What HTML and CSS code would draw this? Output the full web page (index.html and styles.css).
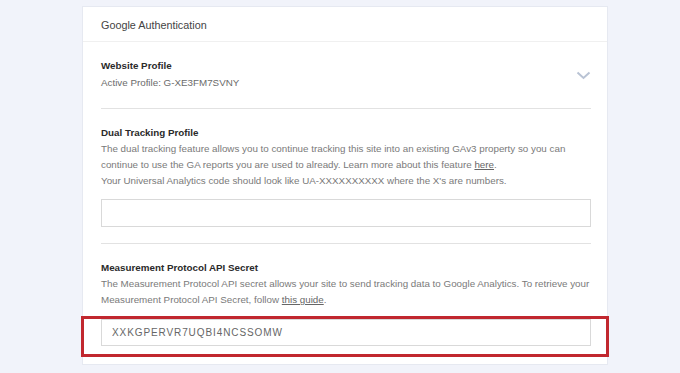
FILE: index.html
```html
<!DOCTYPE html>
<html lang="en">
<head>
    <meta charset="UTF-8">
    <meta name="viewport" content="width=device-width, initial-scale=1.0">
    <title>Google Authentication</title>
    <link rel="stylesheet" href="styles.css">
</head>

<body>
    <div class="settings-card">
        <div class="card-header">Google Authentication</div>

        <div class="setting-row profile-row">
            <div>
                <div class="setting-title">Website Profile</div>
                <div class="setting-sub">Active Profile: G-XE3FM7SVNY</div>
            </div>
            <svg class="chevron" width="15" height="9" viewBox="0 0 15 9">
                <path d="M1.5 1.5 L7.5 7 L13.5 1.5" fill="none" stroke="#b9c3d4" stroke-width="2"/>
            </svg>
        </div>

        <div class="setting-row">
            <div class="setting-title">Dual Tracking Profile</div>
            <p class="setting-desc">The dual tracking feature allows you to continue tracking this site into an existing GAv3 property so you can continue to use the GA reports you are used to already. Learn more about this feature <a href="#">here</a>.<br>
            Your Universal Analytics code should look like UA-XXXXXXXXXX where the X's are numbers.</p>
            <input type="text" class="setting-input">
        </div>

        <div class="setting-row last-row">
            <div class="setting-title">Measurement Protocol API Secret</div>
            <p class="setting-desc">The Measurement Protocol API secret allows your site to send tracking data to Google Analytics. To retrieve your Measurement Protocol API Secret, follow <a href="#">this guide</a>.</p>
        </div>
        <div class="highlight">
            <input type="text" class="setting-input secret-input" value="XXKGPERVR7UQBI4NCSSOMW">
        </div>
    </div>
</body>
</html>
```

FILE: styles.css
```css
body {
    margin: 0;
    background-color: #f1f3fa;
    font-family: 'Liberation Sans', Arial, sans-serif;
}

.settings-card {
    width: 524px;
    margin: 6px 0 0 82px;
    padding-bottom: 7px;
    background-color: #fff;
    border: 1px solid #e6e9f1;
}

.card-header {
    height: 32px;
    line-height: 32px;
    padding: 2px 18px 0;
    font-size: 10.8px;
    color: #444;
    border-bottom: 1px solid #f0f0f0;
}

.setting-row {
    margin: 0 16px 0 18px;
    padding: 16px 0 16px;
    border-bottom: 1px solid #e2e2e2;
}

.profile-row {
    display: flex;
    justify-content: space-between;
    align-items: center;
    padding-bottom: 16px;
}

.setting-title {
    font-size: 9.8px;
    line-height: 16px;
    font-weight: bold;
    color: #2a2a2a;
}

.setting-sub {
    font-size: 9.8px;
    line-height: 18px;
    color: #6b6b6b;
}

.setting-desc {
    margin: 0;
    font-size: 9.8px;
    line-height: 16px;
    color: #7a7a7a;
}

.setting-desc a {
    color: #666;
}

.setting-input {
    display: block;
    box-sizing: border-box;
    width: 100%;
    height: 28px;
    margin-top: 10px;
    padding: 0 10px;
    border: 1px solid #d9d9d9;
    font-family: 'Liberation Sans', Arial, sans-serif;
    font-size: 10px;
}

.last-row {
    border-bottom: none;
    padding-bottom: 8px;
}

.highlight {
    margin: 0 -2px;
    padding: 0 15px 8px 17px;
    border: 3px solid #c1272f;
}

.secret-input {
    margin-top: 0;
    height: 27px;
    color: #666;
    letter-spacing: 0.9px;
}
```
